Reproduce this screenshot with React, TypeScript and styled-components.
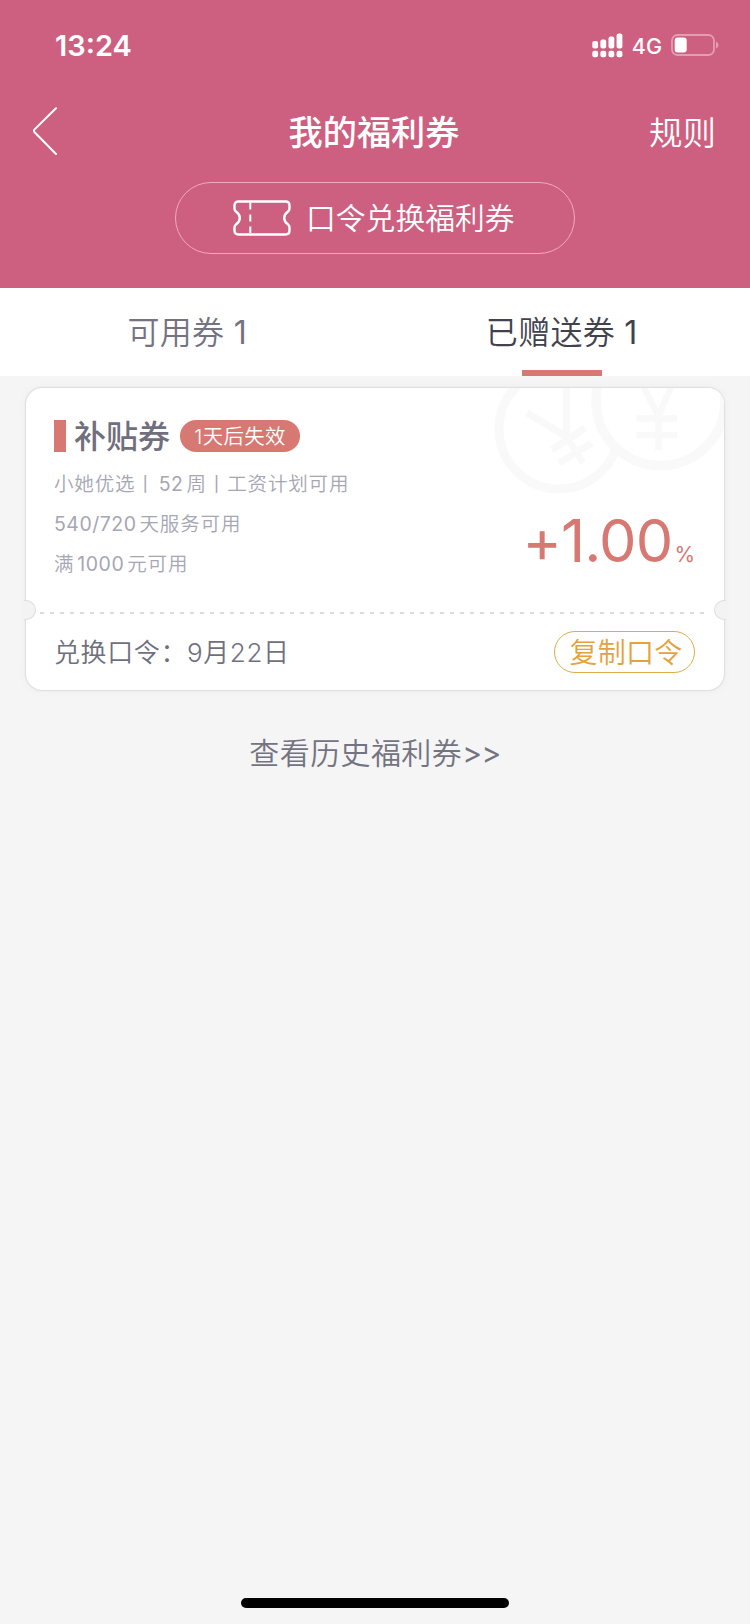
import React from "react";
import styled, { createGlobalStyle } from "styled-components";

const GlobalStyle = createGlobalStyle`
  * { box-sizing: border-box; }
  body {
    margin: 0;
    background: #f5f5f5;
    font-family: Inter, "Noto Sans CJK SC", sans-serif;
    -webkit-font-smoothing: antialiased;
  }
`;

const Screen = styled.div`
  display: flex;
  flex-direction: column;
  width: 750px;
  height: 1624px;
  background: #f5f5f5;
  overflow: hidden;
`;

const Header = styled.header`
  display: flex;
  flex-direction: column;
  height: 288px;
  background: #cd6080;
  color: #fff;
`;

const StatusBar = styled.div`
  display: flex;
  align-items: center;
  justify-content: space-between;
  height: 88px;
  padding: 2px 31px 0 55px;
`;

const Clock = styled.span`
  padding-top: 1px;
  font-size: 29px;
  font-weight: 600;
  line-height: 40px;
`;

const StatusIcons = styled.div`
  display: flex;
  align-items: center;
`;

const Network = styled.span`
  margin: 1px 9px 0 9px;
  font-size: 21.5px;
  font-weight: 500;
  line-height: 28px;
`;

const NavBar = styled.nav`
  display: grid;
  grid-template-columns: 150px 1fr 150px;
  align-items: center;
  height: 88px;
  padding: 0 34px 0 32px;
`;

const BackButton = styled.button`
  display: flex;
  padding: 0 0 2px;
  border: 0;
  background: none;
`;

const Title = styled.h1`
  margin: 2px 0 0;
  font-size: 34.2px;
  font-weight: 500;
  line-height: 48px;
  text-align: center;
`;

const RulesLink = styled.a`
  margin-top: 1px;
  font-size: 33.5px;
  font-weight: 350;
  line-height: 48px;
  text-align: right;
`;

const RedeemButton = styled.button`
  display: flex;
  align-items: center;
  align-self: center;
  width: 400px;
  height: 72px;
  margin-top: 6px;
  padding: 0 0 0 57px;
  border: 1px solid #f2a9bd;
  border-radius: 36px;
  background: none;
  color: #fff;
  font-family: inherit;
  font-size: 29.8px;
  font-weight: 350;
  line-height: 42px;
  gap: 15px;
`;

const Tabs = styled.div`
  display: grid;
  grid-template-columns: 1fr 1fr;
  height: 88px;
  padding-right: 1px;
  background: #fff;
`;

const Tab = styled.div<{ $active?: boolean }>`
  display: flex;
  flex-direction: column;
  align-items: center;
  justify-content: space-between;
  padding-top: 23px;
  color: ${(p) => (p.$active ? "#42424f" : "#737381")};
  font-size: 32px;
  font-weight: 350;
  letter-spacing: 0.3px;
  line-height: 44px;
  &::after {
    content: "";
    width: 80px;
    height: 6px;
    background: ${(p) => (p.$active ? "#d87872" : "transparent")};
  }
`;

const Count = styled.span`
  font-weight: 400;
`;

const Coupon = styled.section`
  position: relative;
  width: 698px;
  height: 302px;
  margin: 12px 26px 0;
  border-radius: 16px;
  background: #fff;
  box-shadow: 0 0 2px rgba(0, 0, 0, 0.25), 0 0 12px rgba(0, 0, 0, 0.035);
`;

const Watermark = styled.svg`
  position: absolute;
  top: 0;
  right: 0;
  border-top-right-radius: 16px;
`;

const Notch = styled.i<{ $side: "left" | "right" }>`
  position: absolute;
  top: 212px;
  ${(p) => p.$side}: -2px;
  width: 12px;
  height: 20px;
  border: 1px solid #dedede;
  border-${(p) => p.$side}: 0;
  border-radius: ${(p) => (p.$side === "left" ? "0 10px 10px 0" : "10px 0 0 10px")};
  background: #f3f3f3;
`;

const CouponBody = styled.div`
  position: relative;
  display: flex;
  justify-content: space-between;
  height: 224px;
  padding: 32px 29px 0 28px;
`;

const Details = styled.div`
  display: flex;
  flex-direction: column;
`;

const CouponHeading = styled.div`
  display: flex;
  align-items: center;
  height: 32px;
  margin-bottom: 12px;
`;

const Marker = styled.i`
  width: 12px;
  height: 32px;
  margin-right: 8px;
  background: #d87872;
`;

const CouponName = styled.h2`
  margin: 1px 0 0;
  color: #6f6f7d;
  font-size: 32px;
  font-weight: 500;
  line-height: 44px;
`;

const Expiry = styled.span`
  width: 120px;
  height: 32px;
  margin-left: 10px;
  border-radius: 16px;
  background: #d87872;
  color: #fff;
  font-size: 20.4px;
  font-weight: 350;
  letter-spacing: 0.4px;
  line-height: 33px;
  text-align: center;
`;

const Condition = styled.p`
  margin: 0;
  color: #a6a6b4;
  font-size: 19.5px;
  font-weight: 350;
  letter-spacing: 0.85px;
  line-height: 40px;
  white-space: pre;
`;

const Figure = styled.span<{ $leading?: boolean }>`
  margin: 0 3px 0 ${(p) => (p.$leading ? 0 : "3px")};
  font-weight: 400;
  letter-spacing: 0.5px;
`;

const Rate = styled.div`
  align-self: flex-start;
  margin-top: 84px;
  color: #d87872;
  font-size: 59.5px;
  line-height: 72px;
  letter-spacing: -0.9px;
  white-space: nowrap;
`;

const Percent = styled.small`
  margin-left: 2px;
  font-size: 21px;
  font-weight: 400;
  letter-spacing: 0;
`;

const Perforation = styled.div`
  height: 2px;
  margin: 0 19px 0 14px;
  background: repeating-linear-gradient(90deg, #dcdcdc 0 4px, transparent 4px 10px);
`;

const CouponFooter = styled.div`
  display: flex;
  align-items: center;
  justify-content: space-between;
  height: 76px;
  padding: 0 29px 0 28px;
`;

const Passphrase = styled.span`
  margin-bottom: 3px;
  color: #6f6f7d;
  font-size: 26px;
  font-weight: 350;
  letter-spacing: 0.6px;
`;

const CopyButton = styled.button`
  width: 141px;
  height: 42px;
  padding: 1px 0 0 3px;
  border: 1px solid #dfab4c;
  border-radius: 21px;
  background: #fff;
  color: #e4a23c;
  font-family: inherit;
  font-size: 28px;
  font-weight: 350;
  letter-spacing: 0.2px;
  line-height: 38px;
`;

const HistoryLink = styled.a`
  align-self: center;
  margin-top: 41px;
  color: #737381;
  font-size: 30px;
  font-weight: 350;
  letter-spacing: 0.4px;
  line-height: 44px;
`;

const Chevrons = styled.span`
  font-weight: 400;
  letter-spacing: -0.6px;
`;

const HomeIndicator = styled.div`
  align-self: center;
  width: 268px;
  height: 10px;
  margin: auto 0 16px;
  border-radius: 5px;
  background: #000;
`;

const SignalIcon = () => (
  <svg width="31" height="25" viewBox="0 0 31 25" fill="#fff">
    {[8, 6.5, 3.5, 0.5].map((y, i) => (
      <React.Fragment key={y}>
        <rect x={0.3 + i * 8.1} y={y} width="5.8" height={15.5 - y} rx="2" />
        <rect x={0.3 + i * 8.1} y="17.7" width="5.8" height="6.6" rx="2" />
      </React.Fragment>
    ))}
  </svg>
);

const BatteryIcon = () => (
  <svg width="48" height="22" viewBox="0 0 48 22" fill="none">
    <rect x="1" y="1" width="42" height="20" rx="5.5" stroke="#e29db1" strokeWidth="1.8" />
    <rect x="3.7" y="3.5" width="12" height="15" rx="3" fill="#fff" />
    <path d="M45 7.5c1.7.7 2.5 2 2.5 3.5s-.8 2.8-2.5 3.5z" fill="#e29db1" />
  </svg>
);

const BackIcon = () => (
  <svg width="27" height="48" viewBox="0 0 27 48" fill="none" stroke="#fff" strokeWidth="2">
    <path d="M24 1.2 2.6 22.4q-1.4 1.4 0 2.8L24 47" strokeLinecap="round" />
  </svg>
);

const TicketIcon = () => (
  <svg width="58" height="36" viewBox="0 0 58 36" fill="none" stroke="#fff" strokeWidth="2.4">
    <path d="M5.5 1.5H52.5Q56.5 1.5 56.5 5.5V8.5Q56.5 10.5 54.8 11.8Q51.2 14.3 51.2 18T54.8 24.2Q56.5 25.5 56.5 27.5V30.5Q56.5 34.5 52.5 34.5H5.5Q1.5 34.5 1.5 30.5V27.5Q1.5 25.5 3.2 24.2Q6.8 21.7 6.8 18T3.2 11.8Q1.5 10.5 1.5 8.5V5.5Q1.5 1.5 5.5 1.5Z" />
    <path d="M17.3 2.5V9.5M17.3 14.5V21.5M17.3 26.5V33" strokeWidth="2" />
  </svg>
);

const CoinWatermark = () => (
  <Watermark width="232" height="110" viewBox="492 388 232 110" fill="none" stroke="#f9f9f9">
    <circle cx="559" cy="429" r="60" strokeWidth="9" />
    <path
      d="M527 413 566.5 436.5V380M566.5 436.5 583 463M552 450 585 428M559 463 592 443"
      strokeWidth="7"
    />
    <circle cx="660.5" cy="401" r="64.5" strokeWidth="9.5" fill="#fff" />
    <path
      d="M639 378 658.5 416 675 378M658.5 416V450M636.5 418.5H677M636.5 435H677"
      strokeWidth="6.5"
    />
  </Watermark>
);

export default function App() {
  return (
    <>
      <GlobalStyle />
      <Screen>
        <Header>
          <StatusBar>
            <Clock>13:24</Clock>
            <StatusIcons>
              <SignalIcon />
              <Network>4G</Network>
              <BatteryIcon />
            </StatusIcons>
          </StatusBar>
          <NavBar>
            <BackButton aria-label="返回">
              <BackIcon />
            </BackButton>
            <Title>我的福利券</Title>
            <RulesLink>规则</RulesLink>
          </NavBar>
          <RedeemButton>
            <TicketIcon />
            口令兑换福利券
          </RedeemButton>
        </Header>
        <Tabs>
          <Tab>
            <span>
              可用券 <Count>1</Count>
            </span>
          </Tab>
          <Tab $active>
            <span>
              已赠送券 <Count>1</Count>
            </span>
          </Tab>
        </Tabs>
        <Coupon>
          <CoinWatermark />
          <CouponBody>
            <Details>
              <CouponHeading>
                <Marker />
                <CouponName>补贴券</CouponName>
                <Expiry>1天后失效</Expiry>
              </CouponHeading>
              <Condition>
                小她优选丨<Figure>52</Figure>周丨工资计划可用
              </Condition>
              <Condition>
                <Figure $leading>540/720</Figure>天服务可用
              </Condition>
              <Condition>
                满<Figure>1000</Figure>元可用
              </Condition>
            </Details>
            <Rate>
              +1.00<Percent>%</Percent>
            </Rate>
          </CouponBody>
          <Perforation />
          <CouponFooter>
            <Passphrase>兑换口令：9月22日</Passphrase>
            <CopyButton>复制口令</CopyButton>
          </CouponFooter>
          <Notch $side="left" />
          <Notch $side="right" />
        </Coupon>
        <HistoryLink>
          查看历史福利券<Chevrons>&gt;&gt;</Chevrons>
        </HistoryLink>
        <HomeIndicator />
      </Screen>
    </>
  );
}
